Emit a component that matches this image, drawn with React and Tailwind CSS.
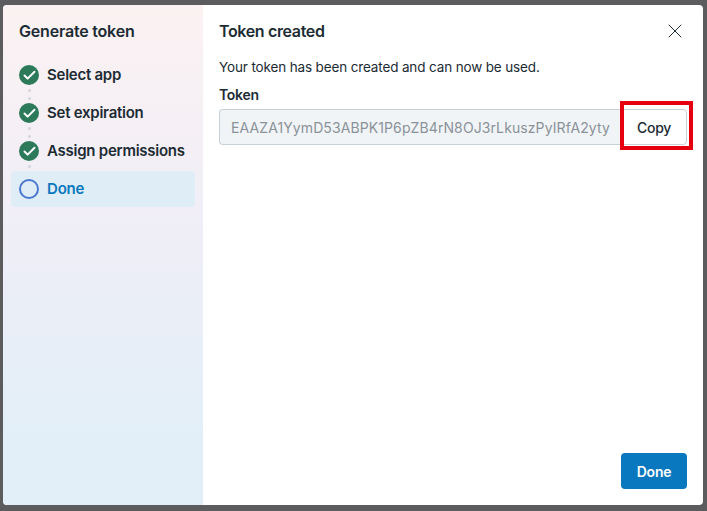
import { X, Check } from 'lucide-react'

const STEPS = ['Select app', 'Set expiration', 'Assign permissions']

function Dots({ count = 2 }) {
  return (
    <div className="flex flex-col gap-[5px] w-[20px] items-center">
      {Array.from({ length: count }).map((_, i) => (
        <div key={i} className="w-[3px] h-[3px] rounded-full bg-[#d3d6da]" />
      ))}
    </div>
  )
}

function Step({ label }) {
  return (
    <div className="flex items-center h-[38px] px-[8px] relative">
      <div className="w-[20px] h-[20px] rounded-full bg-[#2d7a5b] flex items-center justify-center shrink-0">
        <Check size={15} strokeWidth={3.2} className="text-white" />
      </div>
      <span className="ml-[8px] text-[15px] font-semibold text-[#1c2b33] tracking-[-0.25px] whitespace-nowrap">{label}</span>
    </div>
  )
}

export default function App() {
  return (
    <div className="w-[707px] h-[511px] bg-[#5c5c5e] pt-[5px] pl-[3px] font-['Inter','Liberation_Sans',sans-serif]">
      <div className="relative w-[700px] h-[500px] rounded-[4px] overflow-hidden flex bg-white">
        {/* Left step list */}
        <div className="w-[200px] shrink-0 pt-[12px] px-[8px] bg-gradient-to-b from-[#fbf2f2] via-[#f1eef7] via-40% to-[#e3eff8] to-85%">
          <div className="h-[28px] px-[8px] flex items-center text-[16px] font-semibold text-[#1c2b33] tracking-[-0.2px]">
            Generate token
          </div>
          <div className="mt-[11px]">
            {STEPS.map(s => (
              <Step key={s} label={s} />
            ))}
            <div className="flex items-center h-[36px] px-[8px] mt-[1px] rounded-[4px] bg-[#dfedf7]">
              <div className="w-[20px] h-[20px] rounded-full border-2 border-[#4a78d0] shrink-0" />
              <span className="ml-[8px] text-[15px] font-semibold text-[#0a78be] tracking-[-0.2px]">Done</span>
            </div>
          </div>
        </div>

        {/* Right content */}
        <div className="flex-1 flex flex-col p-[16px]">
          <div className="flex items-center justify-between h-[20px]">
            <h2 className="text-[16px] font-semibold text-[#1c2b33] tracking-[-0.35px]">Token created</h2>
            <X size={24} strokeWidth={1} className="text-[#1c2b33]" />
          </div>
          <p className="mt-[16px] text-[13.5px] leading-[20px] text-[#1c2b33] tracking-[-0.14px]">
            Your token has been created and can now be used.
          </p>
          <label className="mt-[8px] text-[14px] leading-[20px] font-semibold text-[#1c2b33] tracking-[-0.3px]">Token</label>
          <div className="mt-[4px] flex h-[36px]">
            <div className="w-[402px] shrink-0 rounded-l-[4px] border border-r-0 border-[#c9d0d6] bg-[#f1f4f7] px-[11px] flex items-center overflow-hidden">
              <span className="text-[14px] text-[#8a9299] whitespace-nowrap tracking-[0.1px]">
                EAAZA1YymD53ABPK1P6pZB4rN8OJ3rLkuszPyIRfA2yty
              </span>
            </div>
            <button className="flex-1 rounded-r-[4px] border border-[#c9d0d6] bg-white text-[14px] font-medium text-[#1c2b33] tracking-[-0.3px]">
              Copy
            </button>
          </div>
          <div className="mt-auto flex justify-end">
            <button className="w-[66px] h-[36px] rounded-[4px] bg-[#0a78be] text-[14px] font-semibold text-white tracking-[-0.2px]">
              Done
            </button>
          </div>

          {/* Red annotation box */}
          <div className="absolute left-[617px] top-[96px] w-[73px] h-[49px] border-[4px] border-[#e6000f] pointer-events-none" />
        </div>

        {/* Dotted connectors between the steps */}
        <div className="absolute left-[16px] top-[84px]"><Dots /></div>
        <div className="absolute left-[16px] top-[122px]"><Dots /></div>
        <div className="absolute left-[16px] top-[160px]"><Dots count={1} /></div>
      </div>
    </div>
  )
}
